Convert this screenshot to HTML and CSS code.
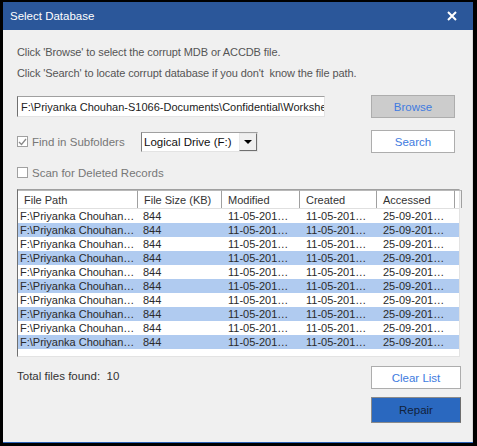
FILE: index.html
```html
<!DOCTYPE html>
<html>
<head>
<meta charset="utf-8">
<link rel="stylesheet" href="styles.css">
</head>
<body>
<div class="frame">
  <div class="window">
    <div class="titlebar">
      <span class="title">Select Database</span>
      <svg class="close" width="10" height="10" viewBox="0 0 10 10"><path d="M1 1 L9 9 M9 1 L1 9" stroke="#fff" stroke-width="2"/></svg>
    </div>
    <div class="content">
      <p class="info">Click 'Browse' to select the corrupt MDB or ACCDB file.</p>
      <p class="info">Click 'Search' to locate corrupt database if you don't&nbsp; know the file path.</p>
      <div class="row row-path">
        <div class="textbox">F:\Priyanka Chouhan-S1066-Documents\Confidential\Worksheets\Database.mdb</div>
        <button class="btn btn-disabled">Browse</button>
      </div>
      <div class="row row-search">
        <label class="check check-sub"><span class="box checked"><svg width="9" height="8" viewBox="0 0 9 8"><path d="M1 4 L3.5 6.5 L8 1" stroke="#888" stroke-width="1.3" fill="none"/></svg></span><span class="check-label">Find in Subfolders</span></label>
        <div class="combo"><span class="combo-text">Logical Drive (F:)</span><span class="combo-btn"><svg width="8" height="4" viewBox="0 0 8 4"><path d="M0 0 H8 L4 4 Z" fill="#000"/></svg></span></div>
        <button class="btn btn-white">Search</button>
      </div>
      <label class="check check-scan"><span class="box"></span><span class="check-label">Scan for Deleted Records</span></label>
      <div class="list">
        <div class="grid head">
          <div>File Path</div><div>File Size (KB)</div><div>Modified</div><div>Created</div><div>Accessed</div><div></div>
        </div>
        <div class="grid rowd"><div>F:\Priyanka Chouhan…</div><div>844</div><div>11-05-201…</div><div>11-05-201…</div><div>25-09-201…</div><div></div></div>
        <div class="grid rowd sel"><div>F:\Priyanka Chouhan…</div><div>844</div><div>11-05-201…</div><div>11-05-201…</div><div>25-09-201…</div><div></div></div>
        <div class="grid rowd"><div>F:\Priyanka Chouhan…</div><div>844</div><div>11-05-201…</div><div>11-05-201…</div><div>25-09-201…</div><div></div></div>
        <div class="grid rowd sel"><div>F:\Priyanka Chouhan…</div><div>844</div><div>11-05-201…</div><div>11-05-201…</div><div>25-09-201…</div><div></div></div>
        <div class="grid rowd"><div>F:\Priyanka Chouhan…</div><div>844</div><div>11-05-201…</div><div>11-05-201…</div><div>25-09-201…</div><div></div></div>
        <div class="grid rowd sel"><div>F:\Priyanka Chouhan…</div><div>844</div><div>11-05-201…</div><div>11-05-201…</div><div>25-09-201…</div><div></div></div>
        <div class="grid rowd"><div>F:\Priyanka Chouhan…</div><div>844</div><div>11-05-201…</div><div>11-05-201…</div><div>25-09-201…</div><div></div></div>
        <div class="grid rowd sel"><div>F:\Priyanka Chouhan…</div><div>844</div><div>11-05-201…</div><div>11-05-201…</div><div>25-09-201…</div><div></div></div>
        <div class="grid rowd"><div>F:\Priyanka Chouhan…</div><div>844</div><div>11-05-201…</div><div>11-05-201…</div><div>25-09-201…</div><div></div></div>
        <div class="grid rowd sel"><div>F:\Priyanka Chouhan…</div><div>844</div><div>11-05-201…</div><div>11-05-201…</div><div>25-09-201…</div><div></div></div>
      </div>
      <div class="row row-bottom">
        <span class="total">Total files found:&nbsp; 10</span>
        <div class="btn-col">
          <button class="btn btn-white btn-wide">Clear List</button>
          <button class="btn btn-blue btn-wide">Repair</button>
        </div>
      </div>
    </div>
  </div>
</div>
</body>
</html>
```
FILE: styles.css
```css
* { box-sizing: border-box; }
html, body { margin: 0; padding: 0; }
body {
  width: 477px;
  height: 446px;
  background: #000;
  font-family: "Liberation Sans", Arial, sans-serif;
  font-size: 11px;
  color: #3a3a3a;
  overflow: hidden;
}
.frame {
  padding: 2px 4px 0 3px;
  height: 446px;
}
.window {
  width: 470px;
  height: 441px;
  display: flex;
  flex-direction: column;
  background: #f0f0f0;
  border-bottom: 1px solid #2b62b8;
}
.titlebar {
  height: 28px;
  background: #2b579a;
  display: flex;
  align-items: center;
  justify-content: space-between;
  padding: 0 16px 0 7px;
  flex: none;
}
.title {
  color: #fff;
  font-size: 11.5px;
}
.close { display: block; margin-top: -1px; }
.content {
  flex: 1;
  padding: 15px 0 0 14px;
  border-right: 1px solid #d8d8d8;
}
.info {
  margin: 0 0 6px 0;
  line-height: 15px;
  color: #555;
  letter-spacing: -0.1px;
}
.row { display: flex; align-items: center; }
.row-path { margin-top: 14px; height: 23px; }
.textbox {
  width: 308px;
  height: 21px;
  background: #fff;
  border-top: 1px solid #a0a0a0;
  border-left: 1px solid #707070;
  border-right: 1px solid #e3e3e3;
  border-bottom: 1px solid #e3e3e3;
  padding: 2px 0 0 3px;
  white-space: nowrap;
  overflow: hidden;
  color: #222;
  line-height: 16px;
  font-size: 11px;
}
.btn {
  font-family: "Liberation Sans", Arial, sans-serif;
  font-size: 11.5px;
  width: 84px;
  height: 23px;
  padding: 0;
  border: 1px solid #adadad;
  color: #3e7be0;
  margin-left: auto;
  margin-right: 17px;
}
.btn-disabled { background: #cccccc; }
.btn-white { background: #fff; }
.btn-wide { width: 90px; margin-right: 0; }
.btn-blue {
  background: #2a68bf;
  color: #11213a;
  border: 1px solid #8a8a8a;
  border-right-color: #6d6d6d;
  height: 26px;
  margin-top: 8px;
}
.row-search { margin-top: 12px; height: 23px; }
.check { display: flex; align-items: center; }
.check-sub { width: 124px; }
.box {
  width: 11px;
  height: 11px;
  border: 1px solid #a0a0a0;
  background: #fff;
  display: flex;
  align-items: center;
  justify-content: center;
  margin-right: 4px;
  flex: none;
}
.check-label { color: #777; font-size: 11.5px; }
.combo {
  width: 117px;
  height: 20px;
  background: #fff;
  border-top: 1px solid #a0a0a0;
  border-left: 1px solid #808080;
  border-right: 1px solid #e3e3e3;
  border-bottom: 1px solid #e3e3e3;
  display: flex;
  align-items: center;
  padding-left: 2px;
}
.combo-text { flex: 1; color: #111; font-size: 11.5px; }
.combo-btn {
  width: 18px;
  height: 18px;
  background: #f0f0f0;
  border: 1px solid #e8e8e8;
  border-right-color: #707070;
  border-bottom-color: #707070;
  display: flex;
  align-items: center;
  justify-content: center;
}
.check-scan { margin-top: 13px; height: 13px; }
.list {
  margin-top: 10px;
  width: 443px;
  height: 168px;
  background: #fff;
  border-top: 1px solid #a0a0a0;
  border-left: 1px solid #707070;
  border-right: 1px solid #e3e3e3;
  border-bottom: 1px solid #e3e3e3;
}
.grid {
  display: grid;
  grid-template-columns: 120px 84px 78px 77px 78px 1fr;
}
.head {
  height: 19px;
  border-bottom: 1px solid #e0e0e0;
}
.head > div {
  border-right: 1px solid #a0a0a0;
  border-top: 1px solid #b8b8b8;
  padding: 2px 0 0 6px;
  color: #333;
  line-height: 15px;
  white-space: nowrap;
  font-size: 11px;
}
.rowd { height: 14px; }
.rowd > div {
  padding-left: 2px;
  line-height: 14px;
  white-space: nowrap;
  overflow: hidden;
  color: #2a2a2a;
  font-size: 11px;
}
.rowd > div:nth-child(2) { padding-left: 5px; }
.rowd > div:nth-child(n+3) { padding-left: 6px; }
.sel { background: #b0cbf0; }
.row-bottom {
  margin-top: 9px;
  align-items: flex-start;
  padding-right: 11px;
}
.total { margin-top: 4px; color: #333; font-size: 11.5px; }
.btn-col { margin-left: auto; display: flex; flex-direction: column; }
```
